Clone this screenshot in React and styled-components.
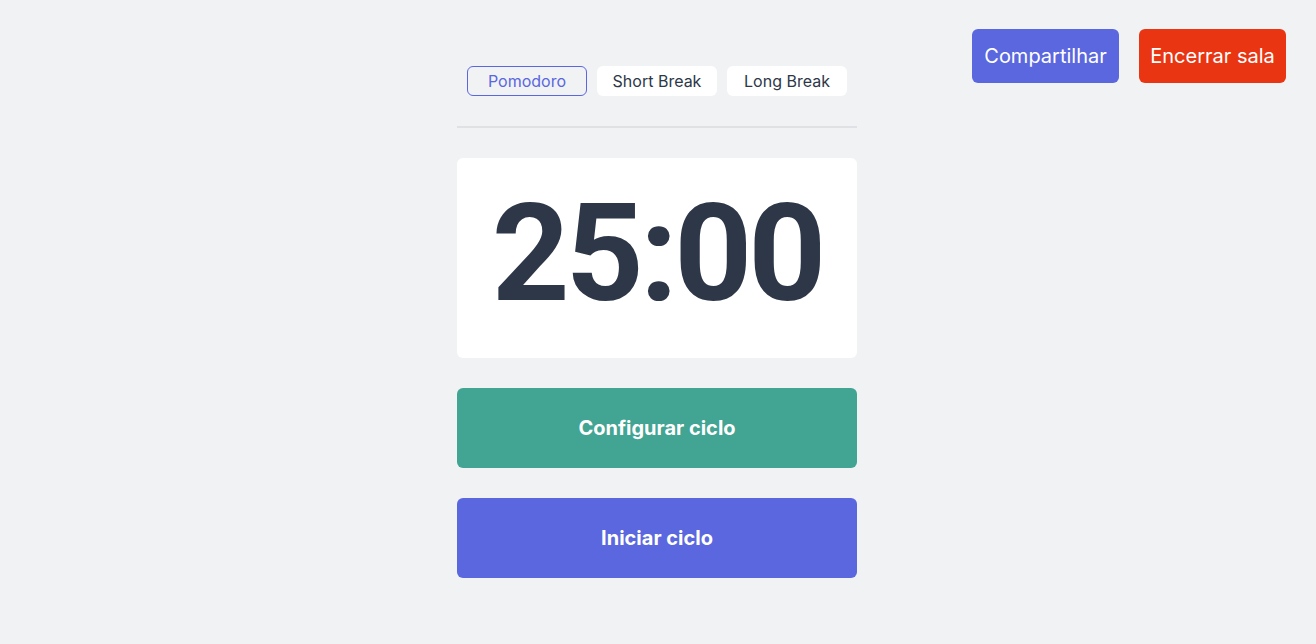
import React from 'react';
import styled, { createGlobalStyle } from 'styled-components';

const COLORS = {
  BG: '#f1f2f4',
  WHITE: '#ffffff',
  TEXT: '#2d3748',
  INDIGO: '#5a67de',
  RED: '#ea3512',
  TEAL: '#42a492',
  LINE: '#dfe1e5',
};

const GlobalStyle = createGlobalStyle`
  * { box-sizing: border-box; }
  html, body {
    margin: 0;
    background: ${COLORS.BG};
    font-family: Inter, "Noto Sans", sans-serif;
    color: ${COLORS.TEXT};
  }
`;

const Page = styled.div`
  min-height: 644px;
  display: grid;
  grid-template-columns: 1fr 400px 1fr;
  padding-right: 2px;
`;

const Main = styled.main`
  grid-column: 2;
  padding-top: 66px;
  display: flex;
  flex-direction: column;
`;

const Header = styled.header`
  grid-column: 3;
  display: flex;
  justify-content: flex-end;
  align-items: flex-start;
  gap: 20px;
  padding: 29px 28px 0 0;
`;

const HeaderButton = styled.button`
  width: 147px;
  height: 54px;
  border: none;
  border-radius: 6px;
  background: ${(p) => (p.danger ? COLORS.RED : COLORS.INDIGO)};
  color: ${COLORS.WHITE};
  font-family: Inter, sans-serif;
  font-size: 20px;
  font-weight: 400;
  cursor: pointer;
`;

const Tabs = styled.div`
  display: flex;
  justify-content: center;
  gap: 10px;
`;

const Tab = styled.button`
  width: 120px;
  height: 30px;
  border-radius: 6px;
  border: 1px solid ${(p) => (p.active ? COLORS.INDIGO : 'transparent')};
  background: ${(p) => (p.active ? 'transparent' : COLORS.WHITE)};
  color: ${(p) => (p.active ? COLORS.INDIGO : COLORS.TEXT)};
  font-family: Inter, sans-serif;
  font-size: 16px;
  padding: 0;
  cursor: pointer;
`;

const Divider = styled.hr`
  margin: 30px 0;
  border: none;
  height: 2px;
  background: ${COLORS.LINE};
`;

const TimerCard = styled.div`
  height: 200px;
  background: ${COLORS.WHITE};
  border-radius: 6px;
  display: flex;
  align-items: center;
  justify-content: center;
`;

const Time = styled.span`
  font-family: Roboto, "Liberation Sans", sans-serif;
  font-weight: 700;
  font-size: 136px;
  line-height: 1;
  letter-spacing: -4px;
  color: ${COLORS.TEXT};
  margin-top: -8px;
`;

const ActionButton = styled.button`
  margin-top: 30px;
  height: 80px;
  width: 100%;
  border: none;
  border-radius: 6px;
  background: ${(p) => p.color};
  color: ${COLORS.WHITE};
  font-family: Inter, sans-serif;
  font-size: 20px;
  font-weight: 700;
  cursor: pointer;
`;

export default function App() {
  return (
    <>
      <GlobalStyle />
      <Page>
        <Main>
          <Tabs>
            <Tab active>Pomodoro</Tab>
            <Tab>Short Break</Tab>
            <Tab>Long Break</Tab>
          </Tabs>
          <Divider />
          <TimerCard>
            <Time>25:00</Time>
          </TimerCard>
          <ActionButton color={COLORS.TEAL}>Configurar ciclo</ActionButton>
          <ActionButton color={COLORS.INDIGO}>Iniciar ciclo</ActionButton>
        </Main>
        <Header>
          <HeaderButton>Compartilhar</HeaderButton>
          <HeaderButton danger>Encerrar sala</HeaderButton>
        </Header>
      </Page>
    </>
  );
}
